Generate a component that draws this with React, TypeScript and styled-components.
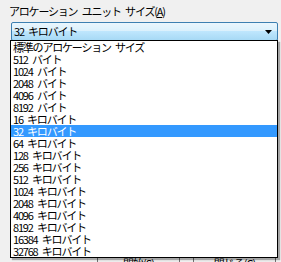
import React from "react";
import styled, { createGlobalStyle } from "styled-components";

const Global = createGlobalStyle`
  html, body { margin: 0; padding: 0; background: #f0f0f0; overflow: hidden; }
  body { font-family: "Noto Sans CJK JP", "Noto Sans", sans-serif; font-size: 11px; color: #000; }
`;

const Page = styled.div`
  position: relative;
  width: 281px;
  height: 262px;
  overflow: hidden;
  padding: 3px 0 0 9px;
  box-sizing: border-box;
`;

const Label = styled.div`
  height: 16px;
  line-height: 16px;
  letter-spacing: -1.2px;
  word-spacing: 3px;
  white-space: nowrap;
`;

const Underline = styled.span`
  text-decoration: underline;
`;

const Combo = styled.div`
  margin: 3px 0 0 2px;
  width: 267px;
  height: 19px;
  box-sizing: border-box;
  border: 1px solid #3c7fb1;
  border-radius: 2px;
  background: linear-gradient(to bottom, #eaf6fd 0%, #d9f0fc 50%, #bee6fd 50%, #a7d9f5 100%);
  display: flex;
  align-items: center;
  justify-content: space-between;
  padding: 0 5px 0 2px;
`;

const ComboText = styled.span`
  letter-spacing: -1.2px;
  word-spacing: 3px;
  line-height: 17px;
  white-space: nowrap;
`;

const Arrow = styled.svg`
  width: 7px;
  height: 4px;
  display: block;
`;

const Footer = styled.div`
  margin-top: 210px;
  display: flex;
  gap: 13px;
  padding-left: 88px;
`;

const Button = styled.div<{ $w: number }>`
  width: ${(p) => p.$w}px;
  height: 23px;
  box-sizing: border-box;
  border: 1px solid #707070;
  border-radius: 3px;
  background: linear-gradient(to bottom, #f2f2f2 0%, #ebebeb 50%, #dddddd 50%, #cfcfcf 100%);
  display: flex;
  align-items: center;
  justify-content: center;
  letter-spacing: -1px;
  line-height: 12px;
`;

const List = styled.div`
  position: absolute;
  left: 10px;
  top: 40px;
  width: 268px;
  box-sizing: border-box;
  border: 1px solid #000;
  background: #fff;
  box-shadow: 2px 2px 1px rgba(0, 0, 0, 0.3);
`;

const Item = styled.div<{ $selected?: boolean }>`
  height: 12px;
  line-height: 12px;
  padding-left: 2px;
  letter-spacing: -1.2px;
  word-spacing: 3px;
  white-space: nowrap;
  background: ${(p) => (p.$selected ? "#3399ff" : "transparent")};
  color: ${(p) => (p.$selected ? "#fff" : "#000")};
`;

const items = [
  "標準のアロケーション サイズ",
  "512 バイト",
  "1024 バイト",
  "2048 バイト",
  "4096 バイト",
  "8192 バイト",
  "16 キロバイト",
  "32 キロバイト",
  "64 キロバイト",
  "128 キロバイト",
  "256 キロバイト",
  "512 キロバイト",
  "1024 キロバイト",
  "2048 キロバイト",
  "4096 キロバイト",
  "8192 キロバイト",
  "16384 キロバイト",
  "32768 キロバイト",
];

export default function App() {
  return (
    <>
      <Global />
      <Page>
        <Label>
          アロケーション ユニット サイズ(<Underline>A</Underline>)
        </Label>
        <Combo>
          <ComboText>32 キロバイト</ComboText>
          <Arrow viewBox="0 0 7 4">
            <path d="M0 0 H7 L3.5 4 Z" fill="#000" />
          </Arrow>
        </Combo>
        <Footer>
          <Button $w={83}>開始(S)</Button>
          <Button $w={83}>閉じる(C)</Button>
        </Footer>
        <List>
          {items.map((t) => (
            <Item key={t} $selected={t === "32 キロバイト"}>
              {t}
            </Item>
          ))}
        </List>
      </Page>
    </>
  );
}
